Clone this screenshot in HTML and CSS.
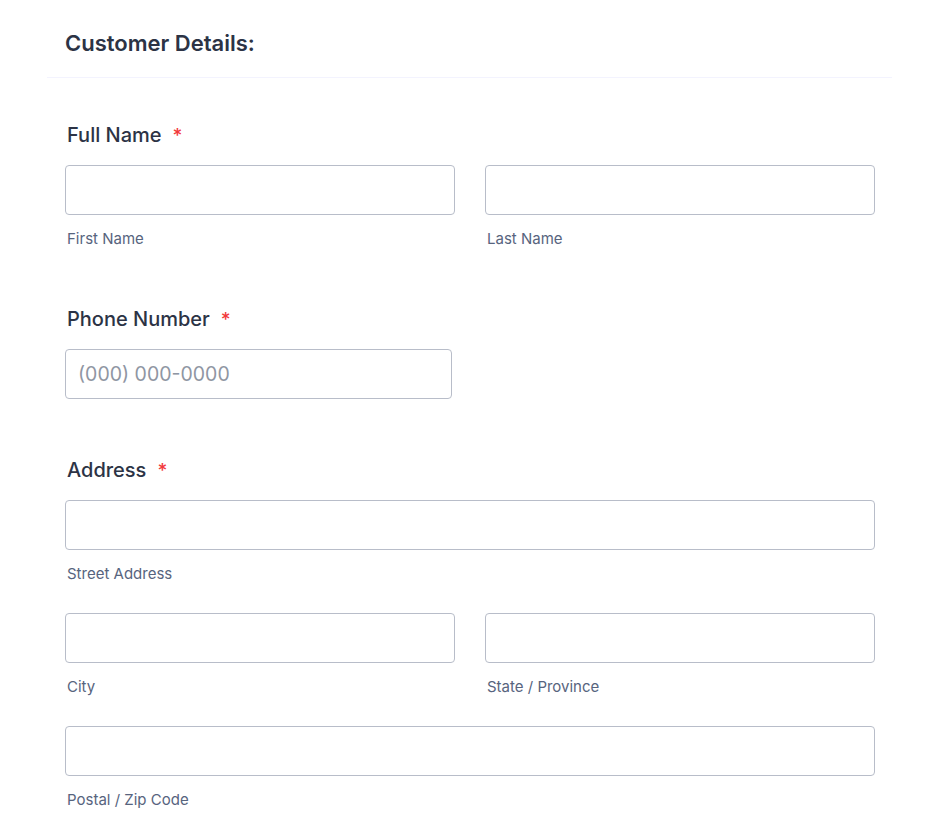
FILE: index.html
```html
<!DOCTYPE html>
<html lang="en">
<head>
<meta charset="utf-8">
<title>Customer Details</title>
<link rel="stylesheet" href="styles.css">
</head>
<body>
<div class="form">
  <div class="form-header">
    <h2 class="form-title">Customer Details:</h2>
  </div>

  <div class="field field-first">
    <label class="field-label">Full Name<span class="req">*</span></label>
    <div class="row">
      <div class="col">
        <input class="input" type="text">
        <span class="sublabel">First Name</span>
      </div>
      <div class="col">
        <input class="input" type="text">
        <span class="sublabel">Last Name</span>
      </div>
    </div>
  </div>

  <div class="field field-phone">
    <label class="field-label">Phone Number<span class="req">*</span></label>
    <input class="input input-phone" type="text" placeholder="(000) 000-0000">
  </div>

  <div class="field field-address">
    <label class="field-label">Address<span class="req">*</span></label>
    <div class="col">
      <input class="input" type="text">
      <span class="sublabel">Street Address</span>
    </div>
    <div class="row row-gap">
      <div class="col">
        <input class="input" type="text">
        <span class="sublabel">City</span>
      </div>
      <div class="col">
        <input class="input" type="text">
        <span class="sublabel">State / Province</span>
      </div>
    </div>
    <div class="col row-gap">
      <input class="input" type="text">
      <span class="sublabel">Postal / Zip Code</span>
    </div>
  </div>
</div>
</body>
</html>
```

FILE: styles.css
```css
* { box-sizing: border-box; }

body {
  margin: 0;
  background: #ffffff;
  font-family: Inter, "Noto Sans", sans-serif;
  color: #2c3345;
}

.form {
  margin-left: 47px;
  width: 845px;
  padding: 0 17px 0 18px;
}

.form-header {
  margin: 0 -17px 0 -18px;
  padding: 30px 18px 21px;
  border-bottom: 1px solid #f3f3fe;
}

.form-title {
  margin: 0;
  font-size: 22px;
  line-height: 26px;
  font-weight: 600;
  color: #2c3345;
}

.field { display: flex; flex-direction: column; }
.field-first { margin-top: 45px; }
.field-phone { margin-top: 58px; }
.field-address { margin-top: 59px; }

.field-label {
  display: block;
  padding-left: 2px;
  font-size: 20px;
  line-height: 24px;
  font-weight: 500;
  color: #2c3345;
  margin-bottom: 17px;
}

.req {
  color: #f23a3c;
  margin-left: 11px;
  font-size: 19px;
}

.row {
  display: flex;
  gap: 30px;
}

.row .col { flex: 1; }

.col { display: flex; flex-direction: column; }

.row-gap { margin-top: 29px; }

.input {
  display: block;
  width: 100%;
  height: 50px;
  margin: 0;
  border: 1px solid #b8bdc9;
  border-radius: 4px;
  background: #fff;
  padding: 0 12px;
  font-family: Inter, "Noto Sans", sans-serif;
  font-size: 19.5px;
  color: #2c3345;
  outline: none;
}

.input::placeholder { color: #8f96a3; }

.input-phone { width: 387px; }

.sublabel {
  display: block;
  margin-top: 14px;
  padding-left: 2px;
  font-size: 15px;
  line-height: 20px;
  color: #57647e;
}
```
